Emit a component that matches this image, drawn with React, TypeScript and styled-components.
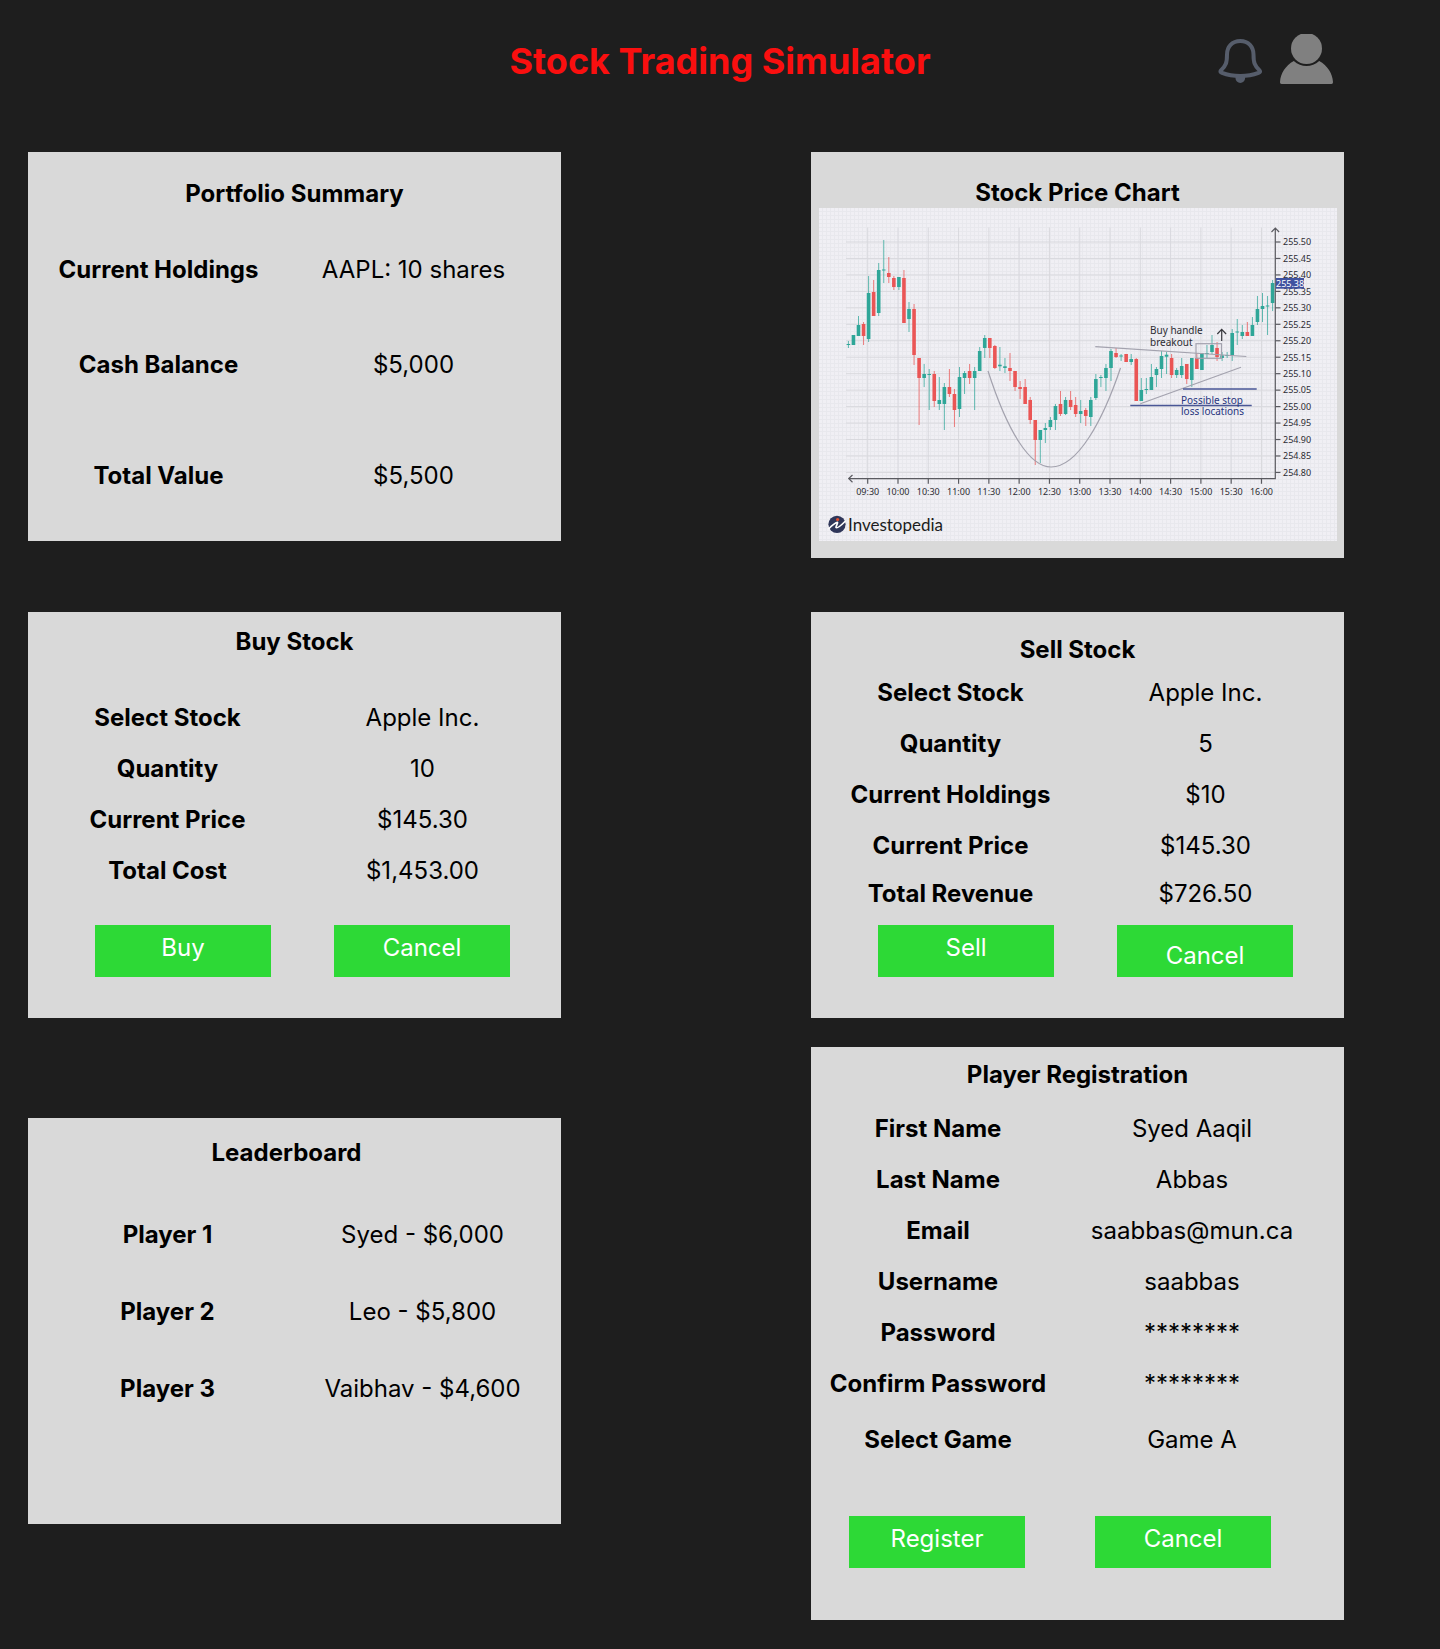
import React from "react";
import styled, { createGlobalStyle } from "styled-components";

const GlobalStyle = createGlobalStyle`
  *, *::before, *::after { box-sizing: border-box; }
  body {
    margin: 0;
    background: #1e1e1e;
    color: #000;
    font-family: Inter, "Liberation Sans", sans-serif;
    font-size: 24px;
    line-height: 29px;
    font-weight: 400;
  }
`;

/* ---------- page ---------- */

const Header = styled.header`
  display: grid;
  grid-template-columns: 1fr auto 1fr;
  align-items: start;
  height: 152px;
  padding: 34px 107px 0;
`;

const PageTitle = styled.h1`
  grid-column: 2;
  margin: 5px 0 0;
  color: #fa0f0f;
  font-size: 36px;
  line-height: 44px;
  font-weight: 700;
`;

const HeaderActions = styled.div`
  display: flex;
  justify-content: flex-end;
  align-items: flex-start;
  gap: 18px;
`;

const IconButton = styled.button`
  display: block;
  padding: 0;
  border: 0;
  background: none;
  cursor: pointer;

  svg {
    display: block;
  }
`;

const BellButton = styled(IconButton)`
  padding-top: 5px;
`;

const Board = styled.main`
  display: grid;
  grid-template-columns: repeat(2, minmax(0, 1fr));
  align-items: start;
  column-gap: 250px;
  padding: 0 96px 29px 28px;

  @media (max-width: 1200px) {
    grid-template-columns: minmax(0, 600px);
    row-gap: 54px;
    padding-right: 28px;
  }
`;

const Column = styled.div`
  display: flex;
  flex-direction: column;
`;

/* ---------- cards ---------- */

const Card = styled.section<{ $before?: number; $top: number; $bottom: number }>`
  margin-top: ${(p) => p.$before ?? 0}px;
  padding: ${(p) => p.$top}px 0 ${(p) => p.$bottom}px;
  background: #d9d9d9;
`;

const CardTitle = styled.h2<{ $insetRight?: number }>`
  margin: 0;
  padding-right: ${(p) => p.$insetRight ?? 0}px;
  font-size: 24px;
  line-height: 29px;
  font-weight: 700;
  text-align: center;
`;

type Align = "left" | "center" | "far";

const sidePadding: Record<Align, string> = {
  far: "0 25px 0 0",
  left: "0 20px 0 3px",
  center: "0 11px 0 12px",
};

const Fields = styled.div<{ $align?: Align; $before: number; $gap?: number }>`
  display: grid;
  row-gap: ${(p) => p.$gap ?? 22}px;
  margin: ${(p) => p.$before}px 0 0;
  padding: ${(p) => sidePadding[p.$align ?? "center"]};
`;

const Pair = styled.div`
  display: grid;
  grid-template-columns: repeat(2, minmax(0, 1fr));
  text-align: center;
  white-space: nowrap;
`;

const Term = styled.dt`
  font-weight: 700;
`;

const Detail = styled.dd`
  margin: 0;
`;

const Label = styled.label`
  font-weight: 700;
`;

const Value = styled.output`
  display: block;
`;

const controlText = `
  display: block;
  width: 100%;
  height: 29px;
  margin: 0;
  padding: 0;
  border: 0;
  border-radius: 0;
  background: transparent;
  color: inherit;
  font: inherit;
  text-align: center;
  text-align-last: center;
  appearance: none;
`;

const TextInput = styled.input`
  ${controlText}
`;

const Select = styled.select`
  ${controlText}
`;

const Actions = styled.div<{ $before: number; $left: number; $gap: number }>`
  display: flex;
  gap: ${(p) => p.$gap}px;
  margin-top: ${(p) => p.$before}px;
  padding-left: ${(p) => p.$left}px;
`;

const Button = styled.button<{ $low?: boolean }>`
  width: 176px;
  padding: ${(p) => (p.$low ? "16px 0 7px" : "8px 0 15px")};
  border: 0;
  background: #2dd936;
  color: #fff;
  font: inherit;
  text-align: center;
  cursor: pointer;
`;

const Ranking = styled.table`
  width: 100%;
  margin-top: 29px;
  padding: 0 11px 0 12px;
  border-spacing: 0;
  table-layout: fixed;
  text-align: center;
  white-space: nowrap;

  th,
  td {
    padding: 24px 0;
  }

  th {
    font-weight: 700;
  }
`;

const ChartFigure = styled.figure`
  margin: 1px 7px 0 8px;

  svg {
    display: block;
    width: 100%;
    height: auto;
  }
`;

/* ---------- icons ---------- */

const BellIcon = () => (
  <svg width="44" height="44" viewBox="0 0 44 44" fill="none" aria-hidden="true">
    <path
      d="M22.3 2C14 2 9 8 9 15.500C9 24 7.800 26.500 3.200 31.200C2 32.500 2.300 33.200 4 33.800C15 38 29.500 38 40.500 33.800C42.200 33.200 42.500 32.500 41.300 31.200C36.700 26.500 35.500 24 35.500 15.500C35.500 8 30.500 2 22.300 2Z"
      stroke="#565d6b"
      strokeWidth="4"
      strokeLinejoin="round"
    />
    <path d="M17.500 37h9.600v2.200a4.800 4.800 0 0 1-9.600 0Z" fill="#565d6b" />
  </svg>
);

const UserIcon = () => (
  <svg width="53" height="50" viewBox="0 0 53 50" fill="#808080" aria-hidden="true">
    <circle cx="26.500" cy="14.500" r="15.500" />
    <path d="M13.800 27C5.500 31.500 0.500 39.500 0 48C0 49.200 0.500 50 1.600 50H51.400C52.500 50 53 49.200 53 48C52.500 39.500 47.500 31.500 39.200 27C35.500 30.300 31 32 26.500 32C22 32 17.500 30.300 13.800 27Z" />
  </svg>
);

/* ---------- price chart ---------- */

const TEAL = "#2fa698";
const RED = "#ea5555";
const AXIS = "#5a5a60";
const LINE = "#a3a2ae";

// direction, body top, body bottom, wick top, wick bottom
type Candle = ["g" | "r", number, number, number, number];

const candles: Candle[] = [
  ["g", 344, 345, 341, 348], ["g", 335, 345, 335, 345], ["g", 325, 336, 316, 336],
  ["r", 324, 336, 322, 345], ["g", 293, 339, 276, 342], ["r", 292, 316, 280, 316],
  ["g", 270, 313, 263, 316], ["g", 269.5, 270.5, 240, 283], ["r", 273, 277, 257, 283],
  ["r", 278, 287, 276, 290], ["g", 277, 287, 277, 290], ["r", 278, 323, 270, 323],
  ["g", 309, 319, 302, 332], ["r", 309, 355, 304, 365], ["r", 358, 378, 358, 425],
  ["g", 374, 378, 364, 387], ["g", 374, 375, 369, 410], ["r", 374, 401, 371, 407],
  ["g", 400, 404, 377, 410], ["g", 387, 404, 383, 430], ["r", 387, 394, 369, 397],
  ["r", 394, 410, 389, 427], ["g", 377, 409, 367, 417], ["g", 373, 378, 371, 394],
  ["r", 371, 378, 364, 384], ["g", 371, 378, 367, 410], ["g", 351, 371, 347, 371],
  ["g", 338, 348, 335, 358], ["r", 338, 348, 338, 358], ["r", 346, 368, 345, 369],
  ["g", 364.7, 366.3, 347, 371], ["g", 366.3, 368, 358, 373], ["r", 368, 371, 353, 381],
  ["r", 371, 387, 371, 391], ["r", 387, 389, 381, 399], ["r", 387, 404, 379, 404],
  ["r", 400, 420, 397, 424], ["r", 420, 440, 420, 465], ["g", 430, 440, 430, 463],
  ["g", 428, 430, 423, 443], ["g", 420, 427, 417, 430], ["g", 406, 420, 404, 430],
  ["r", 404, 414, 391, 416], ["g", 400, 414, 397, 415], ["r", 400, 407, 391, 410],
  ["r", 405, 414, 397, 417], ["g", 411, 414, 400, 423], ["r", 410, 416, 408, 426],
  ["g", 400, 417, 397, 426], ["g", 379, 398, 374, 400], ["g", 377, 378, 375, 387],
  ["g", 368, 378, 364, 391], ["g", 351, 368, 349, 381], ["r", 353, 357, 348, 358],
  ["g", 355.5, 356.5, 354, 361], ["r", 354, 362, 354, 362], ["g", 359, 362, 354, 365],
  ["r", 359, 401, 358, 401], ["g", 390, 401, 378, 401], ["g", 389, 390, 378, 394],
  ["g", 377, 390, 364, 390], ["g", 369, 375, 367, 387], ["g", 356, 369, 351, 378],
  ["g", 354.7, 356.7, 352, 374], ["r", 358, 375, 354, 378], ["g", 370, 375, 368, 378],
  ["g", 366, 375, 358, 378], ["r", 364, 379, 364, 384], ["g", 358, 380, 358, 387],
  ["r", 358, 369, 353, 369], ["g", 353, 370, 353, 370], ["g", 353, 354, 345, 358],
  ["g", 345, 352, 335, 354], ["r", 348, 357, 342, 361], ["g", 355.3, 358, 352, 361],
  ["g", 355, 356, 352, 358], ["g", 333, 355, 329, 361], ["g", 331.5, 332.5, 319, 345],
  ["g", 332, 336, 325, 339], ["r", 332, 336, 322, 336], ["g", 325, 336, 317, 336],
  ["g", 309, 322, 296, 325], ["g", 306, 309, 293, 322], ["g", 305.5, 306.5, 296, 335],
  ["g", 283, 303, 280, 311],
];

const prices = Array.from({ length: 15 }, (_, i) => (255.5 - i * 0.05).toFixed(2));
const times = [
  "09:30", "10:00", "10:30", "11:00", "11:30", "12:00", "12:30",
  "13:00", "13:30", "14:00", "14:30", "15:00", "15:30", "16:00",
];

const timeX = (i: number) => 867.7 + i * 30.29;
const priceY = (i: number) => 242 + i * 16.46;

const ChartText = styled.text<{ $size: number; $face?: string }>`
  font-family: ${(p) => p.$face ?? '"Noto Sans"'}, sans-serif;
  font-size: ${(p) => p.$size}px;
  font-weight: 400;
`;

const PriceChart = () => (
  <svg viewBox="819 208 518 333" role="img" aria-label="Intraday stock price chart">
    <defs>
      <pattern id="paper" x="819" y="208" width="4" height="4" patternUnits="userSpaceOnUse">
        <rect width="4" height="4" fill="#f0eff4" />
        <path d="M3.500 0V4M0 3.500H4" stroke="#e8e8ed" />
      </pattern>
    </defs>
    <rect x="819" y="208" width="518" height="333" fill="url(#paper)" />

    <g stroke="#d9d9de">
      {times.map((t, i) => (
        <path key={t} d={`M${timeX(i)} 227.500V478`} />
      ))}
      {prices.map((p, i) => (
        <path key={p} d={`M846 ${priceY(i)}H1275`} />
      ))}
    </g>

    {candles.map(([dir, top, bottom, high, low], i) => {
      const x = 848.4 + i * 5.05;
      const color = dir === "g" ? TEAL : RED;
      return (
        <g key={i} fill={color}>
          <rect x={x - 0.5} y={high} width="1" height={low - high} opacity="0.75" />
          <rect x={x - 1.8} y={top} width="3.6" height={bottom - top} />
        </g>
      );
    })}

    <g fill="none" stroke={LINE} strokeWidth="1.2">
      <path d="M988 371C1008 433 1030 467 1051 467C1078 467 1103 420 1120.500 368" />
      <path d="M1095.300 346.700L1246.300 356.500M1140.300 403.700L1241 367.300" />
      <rect x="1196" y="343.700" width="25.500" height="14.600" />
    </g>
    <path d="M1183 389H1256.700M1130.300 405.500H1251.700" stroke="#4a5796" strokeWidth="1.4" />

    <g fill="none" stroke={AXIS} strokeWidth="1.2">
      <path d="M1275.300 229V478.600H849M1271.500 232L1275.300 228.200L1279.100 232M852.500 475L848.700 478.600L852.500 482.200" />
      <path d="M1221.700 341V329.500M1217.300 334L1221.700 329.300L1226.100 334" stroke="#38383e" />
      {prices.map((p, i) => (
        <path key={p} d={`M1275.300 ${priceY(i)}H1280.500`} />
      ))}
      {times.map((t, i) => (
        <path key={t} d={`M${timeX(i)} 478.600V483.800`} />
      ))}
    </g>

    <g fill="#2c2c32">
      {prices.map((p, i) => (
        <ChartText key={p} $size={9} x="1283" y={priceY(i) + 3.3}>
          {p}
        </ChartText>
      ))}
      {times.map((t, i) => (
        <ChartText key={t} $size={9} x={timeX(i)} y="495" textAnchor="middle">
          {t}
        </ChartText>
      ))}
      <ChartText $size={10} x="1150" y="333.500">Buy handle</ChartText>
      <ChartText $size={10} x="1150" y="345.500">breakout</ChartText>
    </g>
    <rect x="1276" y="278" width="28" height="10.700" fill="#4052a0" />
    <ChartText $size={9} x="1276" y="286.500" fill="#fff">255.38</ChartText>
    <g fill="#28367f">
      <ChartText $size={10} x="1181" y="403.500">Possible stop</ChartText>
      <ChartText $size={10} x="1181" y="415">loss locations</ChartText>
    </g>

    <circle cx="837" cy="524.300" r="8.600" fill="#2f3659" />
    <path
      d="M829 528.500C832 525.500 834.500 523.300 837.500 522.300C838 523.500 835.500 526.500 836 527.500C837.500 529 841.500 525 845 521.500"
      fill="none"
      stroke="#fff"
      strokeWidth="1.7"
      strokeLinecap="round"
      strokeLinejoin="round"
    />
    <circle cx="837.600" cy="519.500" r="1.600" fill="#e2502f" />
    <ChartText $size={17} $face="Lato" x="848" y="531" fill="#1c1c20">
      Investopedia
    </ChartText>
  </svg>
);

/* ---------- field helpers ---------- */

interface FieldProps {
  id: string;
  label: string;
  value: string;
}

const InputField = ({ id, label, value }: FieldProps) => (
  <Pair>
    <Label htmlFor={id}>{label}</Label>
    <TextInput id={id} type="text" defaultValue={value} autoComplete="off" />
  </Pair>
);

const SelectField = ({ id, label, value }: FieldProps) => (
  <Pair>
    <Label htmlFor={id}>{label}</Label>
    <Select id={id} defaultValue={value}>
      <option>{value}</option>
    </Select>
  </Pair>
);

const OutputField = ({ id, label, value }: FieldProps) => (
  <Pair>
    <Label htmlFor={id}>{label}</Label>
    <Value id={id}>{value}</Value>
  </Pair>
);

const Fact = ({ term, detail }: { term: string; detail: string }) => (
  <Pair>
    <Term>{term}</Term>
    <Detail>{detail}</Detail>
  </Pair>
);

const players = [
  { rank: "Player 1", result: "Syed - $6,000" },
  { rank: "Player 2", result: "Leo - $5,800" },
  { rank: "Player 3", result: "Vaibhav - $4,600" },
];

export default function App() {
  return (
    <>
      <GlobalStyle />
      <Header>
        <PageTitle>Stock Trading Simulator</PageTitle>
        <HeaderActions>
          <BellButton type="button" aria-label="Notifications">
            <BellIcon />
          </BellButton>
          <IconButton type="button" aria-label="Profile">
            <UserIcon />
          </IconButton>
        </HeaderActions>
      </Header>

      <Board>
        <Column>
          <Card $top={27} $bottom={51}>
            <CardTitle>Portfolio Summary</CardTitle>
            <Fields as="dl" $align="left" $before={47} $gap={66}>
              <Fact term="Current Holdings" detail="AAPL: 10 shares" />
              <Fact term="Cash Balance" detail="$5,000" />
            </Fields>
            <Fields as="dl" $align="left" $before={82}>
              <Fact term="Total Value" detail="$5,500" />
            </Fields>
          </Card>

          <Card $before={71} $top={15} $bottom={41}>
            <CardTitle>Buy Stock</CardTitle>
            <Fields $before={47}>
              <SelectField id="buy-stock" label="Select Stock" value="Apple Inc." />
              <InputField id="buy-quantity" label="Quantity" value="10" />
              <OutputField id="buy-price" label="Current Price" value="$145.30" />
              <OutputField id="buy-total" label="Total Cost" value="$1,453.00" />
            </Fields>
            <Actions $before={40} $left={67} $gap={63}>
              <Button type="button">Buy</Button>
              <Button type="button">Cancel</Button>
            </Actions>
          </Card>

          <Card $before={100} $top={20} $bottom={97}>
            <CardTitle $insetRight={16}>Leaderboard</CardTitle>
            <Ranking>
              <tbody>
                {players.map((p) => (
                  <tr key={p.rank}>
                    <th scope="row">{p.rank}</th>
                    <td>{p.result}</td>
                  </tr>
                ))}
              </tbody>
            </Ranking>
          </Card>
        </Column>

        <Column>
          <Card $top={26} $bottom={17}>
            <CardTitle>Stock Price Chart</CardTitle>
            <ChartFigure>
              <PriceChart />
            </ChartFigure>
          </Card>

          <Card $before={54} $top={23} $bottom={41}>
            <CardTitle>Sell Stock</CardTitle>
            <Fields $before={14}>
              <SelectField id="sell-stock" label="Select Stock" value="Apple Inc." />
              <InputField id="sell-quantity" label="Quantity" value="5" />
              <OutputField id="sell-holdings" label="Current Holdings" value="$10" />
              <OutputField id="sell-price" label="Current Price" value="$145.30" />
            </Fields>
            <Fields $before={19}>
              <OutputField id="sell-total" label="Total Revenue" value="$726.50" />
            </Fields>
            <Actions $before={17} $left={67} $gap={63}>
              <Button type="button">Sell</Button>
              <Button type="button" $low>Cancel</Button>
            </Actions>
          </Card>

          <Card $before={29} $top={13} $bottom={52}>
            <CardTitle>Player Registration</CardTitle>
            <Fields $align="far" $before={25}>
              <InputField id="first-name" label="First Name" value="Syed Aaqil" />
              <InputField id="last-name" label="Last Name" value="Abbas" />
              <InputField id="email" label="Email" value="saabbas@mun.ca" />
              <InputField id="username" label="Username" value="saabbas" />
              <InputField id="password" label="Password" value="********" />
              <InputField id="confirm-password" label="Confirm Password" value="********" />
            </Fields>
            <Fields $align="far" $before={27}>
              <SelectField id="game" label="Select Game" value="Game A" />
            </Fields>
            <Actions $before={62} $left={38} $gap={70}>
              <Button type="button">Register</Button>
              <Button type="button">Cancel</Button>
            </Actions>
          </Card>
        </Column>
      </Board>
    </>
  );
}
